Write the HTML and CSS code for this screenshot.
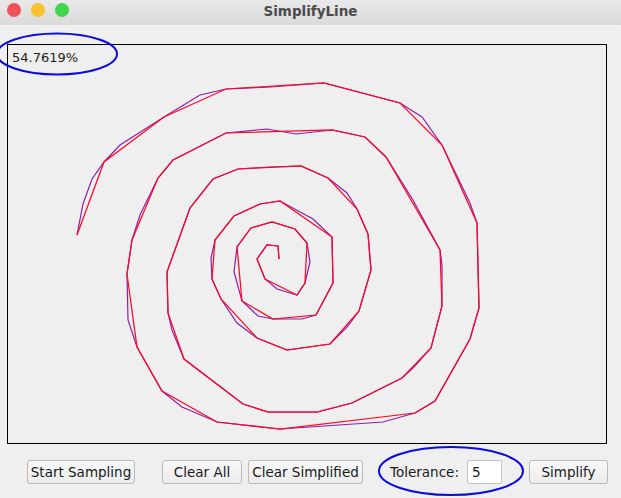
FILE: index.html
```html
<!DOCTYPE html>
<html>
<head>
<meta charset="utf-8">
<link rel="stylesheet" href="styles.css">
</head>
<body>
<div class="window">
  <div class="titlebar">
    <div class="lights">
      <span class="light red"></span>
      <span class="light yellow"></span>
      <span class="light green"></span>
    </div>
    <div class="title">SimplifyLine</div>
  </div>
  <div class="content">
    <div class="canvas">
      <div class="ratio">54.7619%</div>
      <svg class="spiral" viewBox="7 44 600 400" width="600" height="400">
        <polyline class="orig" points="279,259 278,246 267,245 257,259 265,279 277,289 297,295 305,283 310,262 307,243 295,229 272,222 251,228 237,247 234,272 242,301 258,316 273,319 302,319 316,315 333,283 332,237 313,219 280,201 260,204 234,216 215,240 211,258 212,279 221,299 237,323 257,338 287,350 330,344 347,327 359,311 371,270 368,234 357,209 347,193 328,178 301,166 270,167 238,169 213,179 190,208 167,272 168,313 172,330 184,359 243,404 268,412 317,412 352,403 402,378 413,368 431,348 442,306 442,265 440,250 413,200 386,157 365,137 332,130 296,134 267,129 226,133 173,160 158,178 140,215 132,240 127,274 128,320 137,347 162,391 182,407 217,422 280,429 383,422 415,413 435,401 470,339 479,308 477,223 470,203 442,145 422,117 400,103 324,83 270,87 226,89 200,95 164,117 120,145 104,162 92,179 83,204 77,235"/>
        <polyline class="simp" points="279,259 278,246 267,245 257,259 265,279 297,295 305,283 307,243 295,229 272,222 251,228 237,247 242,301 273,319 316,315 333,283 332,237 280,201 260,204 234,216 215,240 212,279 221,299 257,338 287,350 330,344 359,311 371,270 368,234 357,209 328,178 301,166 238,169 213,179 190,208 167,272 168,313 184,359 243,404 268,412 317,412 352,403 402,378 431,348 442,306 440,250 386,157 365,137 332,130 226,133 173,160 158,178 132,240 127,274 137,347 162,391 217,422 280,429 415,413 435,401 470,339 479,308 477,223 442,145 400,103 324,83 226,89 164,117 104,162 77,235"/>
      </svg>
    </div>
    <div class="controls">
      <button class="btn btn-start">Start Sampling</button>
      <button class="btn btn-clear">Clear All</button>
      <button class="btn btn-clearsimp">Clear Simplified</button>
      <span class="tol-label">Tolerance:</span>
      <input class="tol-input" type="text" value="5">
      <button class="btn btn-simplify">Simplify</button>
    </div>
  </div>
  <svg class="marks" viewBox="0 0 621 498" width="621" height="498">
    <ellipse cx="57" cy="54" rx="60" ry="20.5"/>
    <ellipse cx="451" cy="471" rx="72" ry="24"/>
  </svg>
</div>
</body>
</html>
```
FILE: styles.css
```css
html, body {
  margin: 0;
  padding: 0;
  background: #efefef;
}
.window {
  position: relative;
  width: 621px;
  height: 498px;
  overflow: hidden;
  background: #efefef;
  font-family: "DejaVu Sans", "Liberation Sans", sans-serif;
  color: #1a1a1a;
}
.titlebar {
  position: relative;
  height: 25px;
  background: linear-gradient(#e9e9e9, #dadada);
  display: flex;
  align-items: center;
  justify-content: center;
}
.lights {
  position: absolute;
  left: 7px;
  top: 3px;
  display: flex;
  gap: 10px;
}
.light {
  width: 14px;
  height: 14px;
  border-radius: 50%;
}
.red { background: #f1525a; }
.yellow { background: #f8c12f; }
.green { background: #3fd64d; }
.title {
  font-family: "DejaVu Sans", sans-serif;
  font-weight: bold;
  font-size: 13.5px;
  color: #4b4b4b;
  margin-top: -3px;
}
.content {
  padding: 19px 0 0 7px;
}
.canvas {
  position: relative;
  width: 598px;
  height: 398px;
  border: 1px solid #000;
}
.ratio {
  position: absolute;
  left: 4px;
  top: 5px;
  font-size: 13px;
  color: #222;
}
.spiral {
  display: block;
  position: absolute;
  left: -1px;
  top: -1px;
}
.spiral polyline {
  fill: none;
  stroke-linejoin: miter;
}
.orig { stroke: #8c1fa6; stroke-width: 1.2; }
.simp { stroke: #ff0826; stroke-width: 1.25; }
.controls {
  display: flex;
  align-items: center;
  height: 24px;
  margin-top: 16px;
  padding-left: 20px;
}
.btn {
  height: 24px;
  padding: 0;
  border: 1px solid #b9b9b9;
  border-radius: 3px;
  background: linear-gradient(#f8f8f8, #ececec);
  font-family: "DejaVu Sans", sans-serif;
  font-size: 13.5px;
  color: #1a1a1a;
}
.btn-start { width: 108px; }
.btn-clear { width: 80px; margin-left: 27px; }
.btn-clearsimp { width: 115px; margin-left: 6px; }
.tol-label {
  margin-left: 27px;
  font-size: 13.5px;
  width: 70px;
}
.tol-input {
  box-sizing: border-box;
  width: 35px;
  height: 24px;
  margin-left: 7px;
  border: 1px solid #c4c4c4;
  border-radius: 2px;
  background: #fff;
  font-family: "DejaVu Sans", sans-serif;
  font-size: 13.5px;
  padding: 0 4px;
  color: #1a1a1a;
}
.btn-simplify { width: 79px; margin-left: 27px; }
.marks {
  position: absolute;
  left: 0;
  top: 0;
  pointer-events: none;
}
.marks ellipse {
  fill: none;
  stroke: #0b0be0;
  stroke-width: 2;
}
```
